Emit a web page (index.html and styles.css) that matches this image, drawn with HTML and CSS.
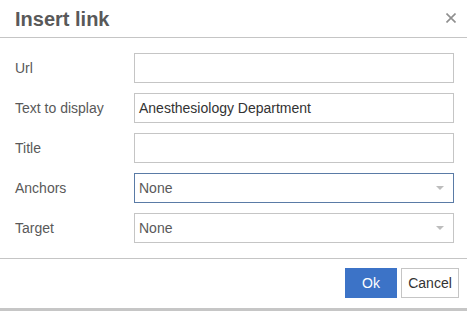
FILE: index.html
```html
<!DOCTYPE html>
<html>
<head>
<meta charset="utf-8">
<link rel="stylesheet" href="styles.css">
</head>
<body>
<div class="dialog">
  <div class="head">
    <div class="title">Insert link</div>
    <svg class="close" width="10" height="10" viewBox="0 0 10 10"><path d="M0.5 0.5 L9.5 9.5 M9.5 0.5 L0.5 9.5" stroke="#8f8f8f" stroke-width="1.6" fill="none"/></svg>
  </div>
  <div class="body">
    <label class="lbl">Url</label>
    <div class="field"></div>
    <label class="lbl">Text to display</label>
    <div class="field">Anesthesiology Department</div>
    <label class="lbl">Title</label>
    <div class="field"></div>
    <label class="lbl">Anchors</label>
    <div class="field select focus"><span>None</span><span class="caret"></span></div>
    <label class="lbl">Target</label>
    <div class="field select"><span>None</span><span class="caret"></span></div>
  </div>
  <div class="foot">
    <button class="btn primary">Ok</button>
    <button class="btn">Cancel</button>
  </div>
</div>
</body>
</html>
```
FILE: styles.css
```css
html, body {
  margin: 0;
  padding: 0;
  background: #fff;
}
body {
  font-family: "Liberation Sans", Arial, sans-serif;
  font-size: 14px;
  color: #595959;
}
.dialog {
  width: 467px;
  height: 308px;
  border-bottom: 3px solid #c6c6c6;
  display: flex;
  flex-direction: column;
}
.head {
  display: flex;
  justify-content: space-between;
  align-items: center;
  padding: 9px 11px 8px 15px;
  border-bottom: 1px solid #c5c5c5;
}
.title {
  font-size: 20px;
  line-height: 20px;
  font-weight: bold;
  color: #595959;
}
.close {
  display: block;
  margin-top: -2px;
}
.body {
  display: grid;
  grid-template-columns: 119px 1fr;
  row-gap: 10px;
  align-items: center;
  padding: 15px 13px 15px 15px;
  border-bottom: 1px solid #c5c5c5;
}
.lbl {
  color: #595959;
  line-height: 16px;
}
.field {
  box-sizing: border-box;
  height: 30px;
  border: 1px solid #c5c5c5;
  padding: 0 4px;
  line-height: 28px;
  color: #333;
  white-space: nowrap;
}
.select {
  display: flex;
  justify-content: space-between;
  align-items: center;
  color: #595959;
  padding-right: 9px;
}
.focus {
  border-color: #5a7ba6;
}
.caret {
  width: 0;
  height: 0;
  border-left: 4px solid transparent;
  border-right: 4px solid transparent;
  border-top: 4px solid #bdbdbd;
}
.foot {
  display: flex;
  justify-content: flex-end;
  gap: 4px;
  padding: 9px 8px 8px 8px;
}
.btn {
  box-sizing: border-box;
  height: 30px;
  font-family: "Liberation Sans", Arial, sans-serif;
  font-size: 14px;
  border: 1px solid #c5c5c5;
  background: #fff;
  color: #333;
  padding: 0;
  width: 58px;
}
.primary {
  width: 52px;
  background: #3c73c7;
  border-color: #3c73c7;
  color: #fff;
}
```
